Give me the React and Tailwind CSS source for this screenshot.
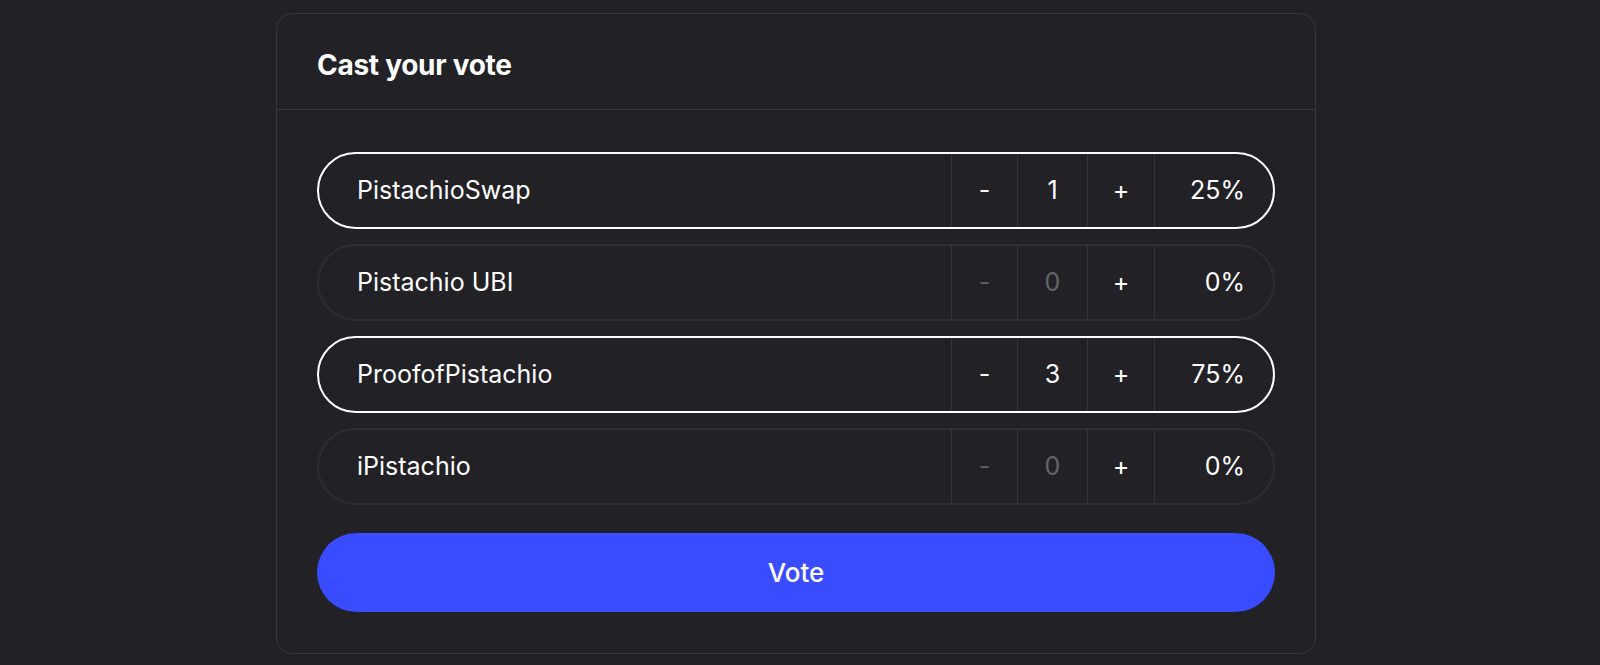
import React, { useState } from "react";

const projects = [
  { id: 1, name: "PistachioSwap", votes: 1 },
  { id: 2, name: "Pistachio UBI", votes: 0 },
  { id: 3, name: "ProofofPistachio", votes: 3 },
  { id: 4, name: "iPistachio", votes: 0 },
];

function VoteRow({ name, votes, total, onChange }) {
  const active = votes > 0;
  const pct = total > 0 ? Math.round((votes / total) * 100) : 0;
  return (
    <div
      className={
        active
          ? "flex h-[77px] rounded-full border-2 border-white overflow-hidden"
          : "flex h-[77px] rounded-full border-2 border-[#2e2d33] overflow-hidden"
      }
    >
      <div className="flex-1 flex items-center pl-[38px] text-[25px] text-white">{name}</div>
      <button
        className={
          active
            ? "w-[66px] border-l border-[#36353a] text-[25px] text-white"
            : "w-[66px] border-l border-[#36353a] text-[25px] text-[#5f5e64]"
        }
        onClick={() => onChange(Math.max(0, votes - 1))}
      >
        -
      </button>
      <div
        className={
          active
            ? "w-[70px] border-l border-[#36353a] flex items-center justify-center text-[25px] text-white"
            : "w-[70px] border-l border-[#36353a] flex items-center justify-center text-[25px] text-[#66656b]"
        }
      >
        {votes}
      </div>
      <button
        className="w-[67px] border-l border-[#36353a] text-[25px] text-white"
        onClick={() => onChange(votes + 1)}
      >
        +
      </button>
      <div className="w-[119px] border-l border-[#36353a] flex items-center justify-end pr-[28px] text-[25px] text-white">
        {pct}%
      </div>
    </div>
  );
}

export default function App() {
  const [items, setItems] = useState(projects);
  const total = items.reduce((s, p) => s + p.votes, 0);

  function setVotes(id, value) {
    setItems(items.map((p) => (p.id === id ? { ...p, votes: value } : p)));
  }

  return (
    <div
      className="min-h-screen bg-[#222126] pt-[13px] flex justify-center pr-[8px]"
      style={{ fontFamily: "Inter, 'Noto Sans', sans-serif" }}
    >
      <div className="w-[1040px] self-start border border-[#38373c] rounded-2xl">
        <div className="h-[96px] border-b border-[#38373c] flex items-center px-10 pt-[6px]">
          <h2 className="text-[28px] font-bold text-white tracking-[-0.01em]">Cast your vote</h2>
        </div>
        <div className="px-10 pt-[42px] pb-[41px] flex flex-col">
          <div className="flex flex-col gap-[15px]">
            {items.map((p) => (
              <VoteRow
                key={p.id}
                name={p.name}
                votes={p.votes}
                total={total}
                onChange={(v) => setVotes(p.id, v)}
              />
            ))}
          </div>
          <button className="mt-[28px] h-[79px] rounded-full bg-[#3a4cff] text-white text-[26px] font-medium">
            Vote
          </button>
        </div>
      </div>
    </div>
  );
}
